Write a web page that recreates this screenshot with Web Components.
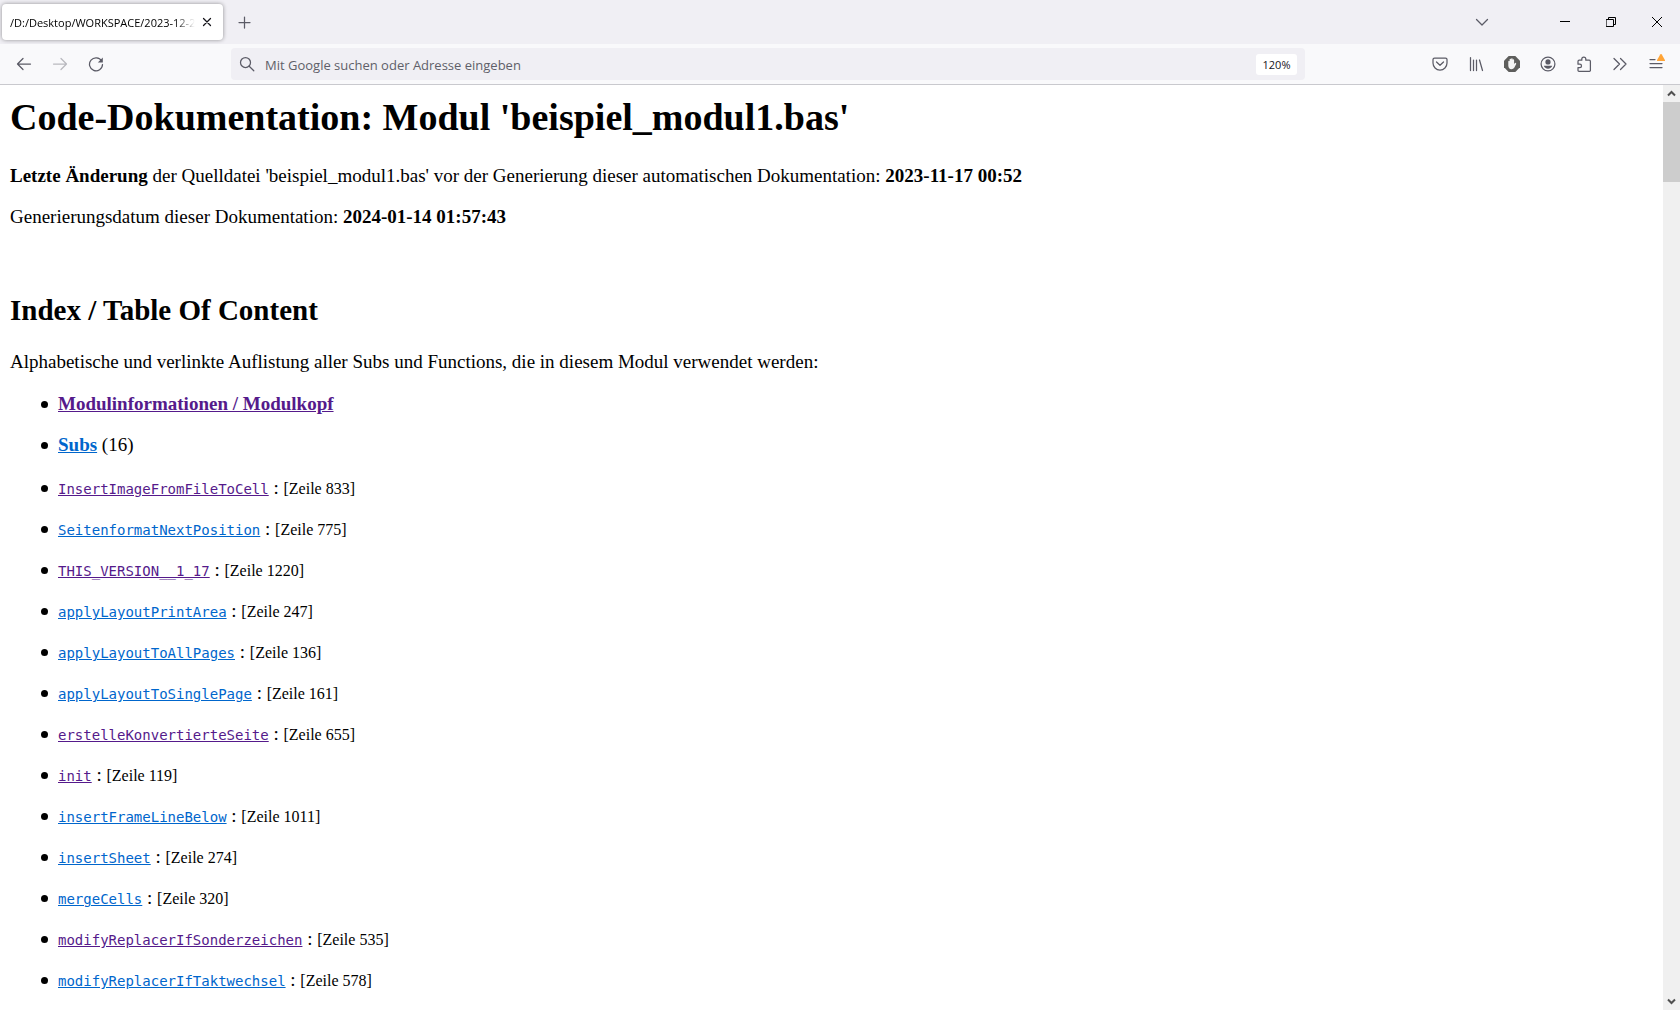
<!DOCTYPE html>
<html lang="de">
<head>
<meta charset="utf-8">
<title>Code-Dokumentation: Modul 'beispiel_modul1.bas'</title>
<style>
html, body { height: 100%; margin: 0; overflow: hidden; }
body { background: #fff; color: #000; }
</style>
</head>
<body>
<browser-window>
  <tab-strip slot="tabs"></tab-strip>
  <nav-toolbar slot="toolbar"></nav-toolbar>
  <doc-page>
    <doc-index>
      <sub-entry name="InsertImageFromFileToCell" line="833" seen></sub-entry>
      <sub-entry name="SeitenformatNextPosition" line="775"></sub-entry>
      <sub-entry name="THIS_VERSION__1_17" line="1220" seen></sub-entry>
      <sub-entry name="applyLayoutPrintArea" line="247"></sub-entry>
      <sub-entry name="applyLayoutToAllPages" line="136"></sub-entry>
      <sub-entry name="applyLayoutToSinglePage" line="161"></sub-entry>
      <sub-entry name="erstelleKonvertierteSeite" line="655" seen></sub-entry>
      <sub-entry name="init" line="119" seen></sub-entry>
      <sub-entry name="insertFrameLineBelow" line="1011"></sub-entry>
      <sub-entry name="insertSheet" line="274"></sub-entry>
      <sub-entry name="mergeCells" line="320"></sub-entry>
      <sub-entry name="modifyReplacerIfSonderzeichen" line="535" seen></sub-entry>
      <sub-entry name="modifyReplacerIfTaktwechsel" line="578"></sub-entry>
    </doc-index>
  </doc-page>
  <page-scrollbar slot="scrollbar"></page-scrollbar>
</browser-window>

<script>
const svg = (size, body) => `<svg width="${size}" height="${size}" viewBox="0 0 ${size} ${size}" fill="none" stroke="currentColor" stroke-width="1.25" stroke-linecap="round" stroke-linejoin="round">${body}</svg>`;
const icons = {
  close: svg(16, '<path d="M4.500 4.500l7 7M11.500 4.500l-7 7"/>'),
  plus: svg(16, '<path d="M8.500 3v11M3 8.500h11"/>'),
  chevron: svg(16, '<path d="M2.500 5.500L8 11l5.500-5.500"/>'),
  minimize: svg(10, '<path d="M0 4.500h10" stroke="#000" stroke-width="1" stroke-linecap="butt"/>'),
  restore: svg(10, '<path d="M.5 2.500h7v7h-7zM2.500 2.500v-2h7v7h-2" stroke="#000" stroke-width="1" stroke-linejoin="miter"/>'),
  quit: svg(10, '<path d="M0 0l10 10M10 0L0 10" stroke="#000" stroke-width="1" stroke-linecap="butt"/>'),
  back: svg(16, '<path d="M14.500 8H1.700M7 2.500L1.500 8 7 13.500"/>'),
  forward: svg(16, '<path d="M1.500 8h12.800M9 2.500L14.500 8 9 13.500"/>'),
  reload: svg(16, '<path d="M13.600 5A6.500 6.500 0 1 0 14.500 8.500"/><path d="M14.800 1.500v5h-5z" fill="currentColor" stroke="none"/>'),
  search: svg(16, '<circle cx="6.500" cy="6.500" r="5"/><path d="M10.200 10.200l4.600 4.600"/>'),
  pocket: svg(16, '<path d="M2.500 2h11A1.500 1.500 0 0 1 15 3.500V7A7 7 0 0 1 1 7V3.500A1.500 1.500 0 0 1 2.500 2z"/><path d="M4.500 6L8 9.300 11.500 6"/>'),
  library: svg(16, '<path d="M2.500 1.500v13M5.500 4v10.500M8.500 4v10.500M11.500 4l3 10.500"/>'),
  adblock: svg(16, '<path d="M4.700 0h6.600L16 4.700v6.600L11.300 16H4.700L0 11.300V4.700z" fill="#5e5e5c" stroke="none"/><path d="M4.300 9.500V5.200a.7.700 0 0 1 1.300 0V3.600a.7.700 0 0 1 1.500 0v-.5a.8.800 0 0 1 1.600 0v.8a.7.700 0 0 1 1.400 0v4l.9-.9a.8.800 0 0 1 1.200.9l-1.800 3.600a3.500 3.500 0 0 1-3 1.800c-1.800 0-3.100-1.500-3.100-3.800z" fill="#f3f3f3" stroke="none"/>'),
  account: svg(16, '<circle cx="8" cy="8" r="6.900"/><circle cx="8" cy="5.900" r="2.600" fill="currentColor" stroke="none"/><path d="M3.800 9.800h8.400c-.5 1.700-2.200 2.900-4.200 2.900s-3.700-1.200-4.200-2.900z" fill="currentColor" stroke="none"/>'),
  puzzle: svg(16, '<path d="M5.800 4.200V3a2 2 0 0 1 4 0v1.200h3.400a1.200 1.200 0 0 1 1.200 1.200v8.800a1.200 1.200 0 0 1-1.200 1.200H3.200A1.200 1.200 0 0 1 2 14.200v-2.600h1.800a1.700 1.700 0 0 0 0-3.400H2V5.400a1.200 1.200 0 0 1 1.200-1.200z"/>'),
  more: svg(16, '<path d="M2 2.500L7.500 8 2 13.500M8.500 2.500L14 8l-5.500 5.500"/>'),
  menu: svg(16, '<path d="M2 3.500h5M2 7.500h12M2 11.500h12"/>'),
  up: svg(9, '<path d="M1 6.500L4.500 3 8 6.500" stroke-width="2" stroke-linecap="butt" stroke-linejoin="miter"/>'),
  down: svg(9, '<path d="M1 2.500L4.500 6 8 2.500" stroke-width="2" stroke-linecap="butt" stroke-linejoin="miter"/>')
};

function define(name, render) {
  customElements.define(name, class extends HTMLElement {
    connectedCallback() {
      if (!this.shadowRoot) this.attachShadow({ mode: 'open' }).innerHTML = render(this).trim();
    }
  });
}

define('browser-window', () => `
<style>
:host { display: grid; grid-template-rows: auto auto minmax(0, 1fr); height: 100vh; }
main { display: grid; grid-template-columns: minmax(0, 1fr) auto; min-height: 0; border-top: 1px solid #c9c9ce; }
</style>
<slot name="tabs"></slot>
<slot name="toolbar"></slot>
<main><slot></slot><slot name="scrollbar"></slot></main>`);

define('icon-button', el => `
<style>
:host { display: block; width: 32px; height: 32px; color: #5b5b66; }
button { display: flex; align-items: center; justify-content: center; position: relative; width: 100%; height: 100%; padding: 0; border: 0; background: none; color: inherit; }
svg { display: block; }
:host([off]) { color: #b9b9bf; }
</style>
<button type="button" aria-label="${el.getAttribute('label')}" ${el.hasAttribute('off') ? 'disabled' : ''}>${icons[el.getAttribute('icon')]}<slot></slot></button>`);

define('tab-strip', () => `
<style>
:host { display: flex; align-items: center; height: 44px; background: #f0eff4; font: 11px/16px "Open Sans", sans-serif; color: #15141a; }
.tab { display: flex; align-items: center; box-sizing: border-box; width: 221px; height: 36px; margin-left: 2px; padding: 0 4px 0 8px; background: #fff; border-radius: 4px; box-shadow: 0 0 4px rgba(0,0,0,.4); }
.title { flex: 1; overflow: hidden; padding-top: 1px; white-space: nowrap; color: #000; mask-image: linear-gradient(to left, transparent, #000 20px); }
.tab icon-button { width: 24px; height: 24px; color: #15141a; }
.new { margin-left: 5px; }
.list { margin-left: auto; margin-right: 44px; }
.win { width: 46px; height: 44px; }
</style>
<div class="tab"><span class="title">/D:/Desktop/WORKSPACE/2023-12-2</span><icon-button icon="close" label="Tab schließen"></icon-button></div>
<icon-button class="new" icon="plus" label="Neuer Tab"></icon-button>
<icon-button class="list" icon="chevron" label="Tabs auflisten"></icon-button>
<icon-button class="win" icon="minimize" label="Minimieren"></icon-button>
<icon-button class="win" icon="restore" label="Verkleinern"></icon-button>
<icon-button class="win" icon="quit" label="Schließen"></icon-button>`);

define('nav-toolbar', () => `
<style>
:host { display: flex; align-items: center; gap: 4px; height: 40px; padding: 0 8px; background: #f9f9fb; font-family: "Open Sans", sans-serif; }
.spring { width: 111px; }
.url { display: flex; align-items: center; flex: 1; min-width: 0; height: 32px; padding: 0 8px; border-radius: 4px; background: #f0eff4; color: #5b5b66; }
label { display: flex; margin-right: 10px; }
input { flex: 1; min-width: 0; padding: 2px 0 0; border: 0; outline: 0; background: none; font: 13px/20px "Open Sans", sans-serif; color: #15141a; }
input::placeholder { color: #5f5f69; opacity: 1; }
.zoom { width: 41px; height: 21px; padding: 1px 0 0; border: 0; border-radius: 3px; background: #fff; font: 11px/20px "Open Sans", sans-serif; color: #15141a; }
.badge { position: absolute; right: 7px; top: 6px; }
</style>
<icon-button icon="back" label="Zurück"></icon-button>
<icon-button icon="forward" label="Vor" off></icon-button>
<icon-button icon="reload" label="Neu laden"></icon-button>
<span class="spring"></span>
<div class="url"><label for="address">${icons.search}</label><input id="address" type="text" placeholder="Mit Google suchen oder Adresse eingeben" aria-label="Adresse"><button class="zoom" type="button">120%</button></div>
<span class="spring"></span>
<icon-button icon="pocket" label="Pocket"></icon-button>
<icon-button icon="library" label="Bibliothek"></icon-button>
<icon-button icon="adblock" label="Werbeblocker"></icon-button>
<icon-button icon="account" label="Konto"></icon-button>
<icon-button icon="puzzle" label="Erweiterungen"></icon-button>
<icon-button icon="more" label="Weitere Werkzeuge"></icon-button>
<icon-button icon="menu" label="Menü"><svg class="badge" width="8" height="7" viewBox="0 0 8 7"><path d="M3.200.5a1 1 0 0 1 1.600 0L7.900 6a.7.7 0 0 1-.6 1H.7a.7.700 0 0 1-.6-1z" fill="#ffa436"/></svg></icon-button>`);

define('doc-page', () => `
<style>
:host { display: block; box-sizing: border-box; overflow: hidden; padding: 10px; font: 19px/22px "Liberation Serif", serif; }
h1 { margin: 0 0 26px; font-size: 38px; line-height: 44px; }
h2 { margin: 25px 0 24px; font-size: 29px; line-height: 33px; }
p { margin: 19px 0; }
</style>
<h1>Code-Dokumentation: Modul 'beispiel_modul1.bas'</h1>
<p><b>Letzte Änderung</b> der Quelldatei 'beispiel_modul1.bas' vor der Generierung dieser automatischen Dokumentation: <b>2023-11-17 00:52</b></p>
<p>Generierungsdatum dieser Dokumentation: <b>2024-01-14 01:57:43</b></p>
<br>
<h2>Index / Table Of Content</h2>
<p>Alphabetische und verlinkte Auflistung aller Subs und Functions, die in diesem Modul verwendet werden:</p>
<slot></slot>`);

const bullet = 'content: ""; display: inline-block; width: 7px; height: 7px; margin-right: 10px; border-radius: 50%; background: #000; vertical-align: 2px;';

define('doc-index', () => `
<style>
:host { display: flex; flex-direction: column; gap: 21px; margin-top: 20px; padding-left: 31px; }
ul, .subs { display: flex; flex-direction: column; gap: 19px; margin: 0; padding: 0; list-style: none; }
li::before { ${bullet} }
a { color: #0066cc; }
a.seen { color: #551a8b; }
</style>
<ul>
<li><a class="seen" href="#modulkopf"><b>Modulinformationen / Modulkopf</b></a></li>
<li><a href="#subs"><b>Subs</b></a> (16)</li>
</ul>
<div class="subs" role="list"><slot></slot></div>`);

define('sub-entry', el => `
<style>
:host { display: block; height: 22px; }
:host::before { ${bullet} }
a { color: #0066cc; font-family: "DejaVu Sans Mono", monospace; font-size: 14px; line-height: 20px; }
:host([seen]) a { color: #551a8b; }
small { font-size: 16px; line-height: 20px; }
</style><a href="#${el.getAttribute('name')}">${el.getAttribute('name')}</a> : <small>[Zeile ${el.getAttribute('line')}]</small>`);

define('page-scrollbar', () => `
<style>
:host { display: flex; flex-direction: column; width: 17px; background: #f0f0f0; }
icon-button { width: 17px; height: 17px; color: #505050; }
.track { flex: 1; }
.thumb { height: 80px; background: #cdcdcd; }
</style>
<icon-button icon="up" label="Nach oben"></icon-button>
<div class="track"><div class="thumb"></div></div>
<icon-button icon="down" label="Nach unten"></icon-button>`);
</script>
</body>
</html>
